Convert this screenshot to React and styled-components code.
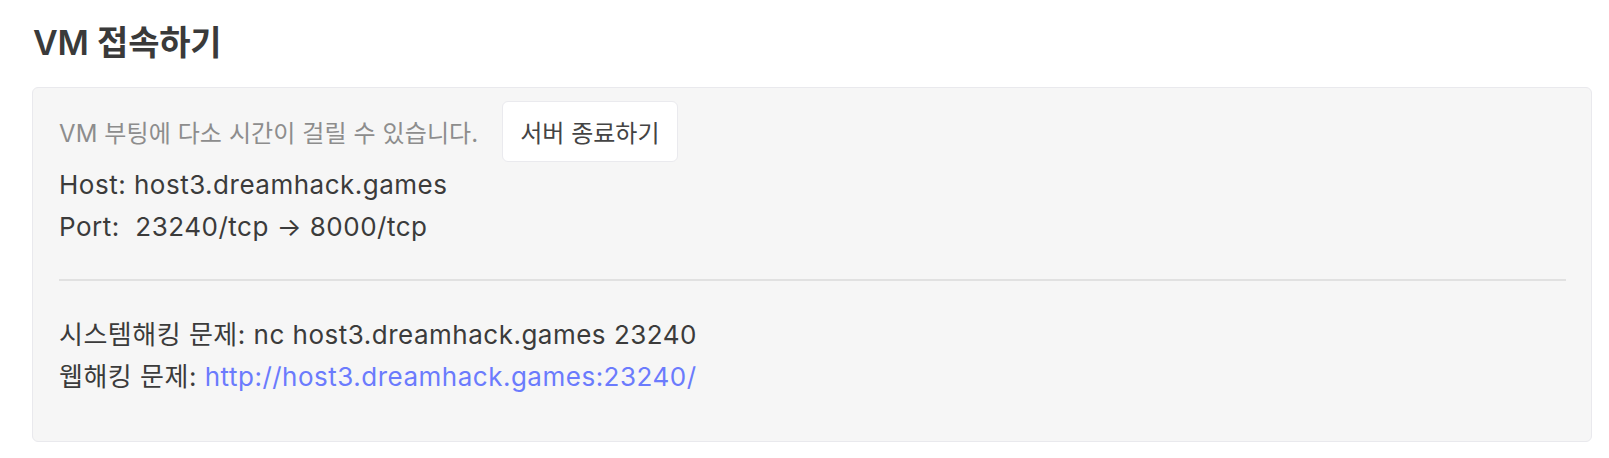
import React from "react";
import styled, { createGlobalStyle } from "styled-components";

const GlobalStyle = createGlobalStyle`
  html, body {
    margin: 0;
    padding: 0;
    background: #ffffff;
  }
  body {
    font-family: Inter, "Noto Sans CJK KR", "Noto Sans", sans-serif;
    color: #3b3b3b;
    -webkit-font-smoothing: antialiased;
  }
`;

const Page = styled.div`
  padding: 19px 17px 16px 32px;
`;

const Title = styled.h2`
  margin: 0 0 20px 1px;
  font-size: 34px;
  line-height: 48px;
  font-weight: 600;
  color: #3a3a3a;
  letter-spacing: -0.2px;
`;

const Card = styled.section`
  background: #f6f6f6;
  border: 1px solid #e9e9ed;
  border-radius: 6px;
  padding: 13px 25px 43px 26px;
`;

const TopRow = styled.div`
  display: flex;
  align-items: center;
  gap: 24px;
`;

const Hint = styled.span`
  font-size: 24px;
  letter-spacing: 0.1px;
  color: #8d8d8d;
`;

const Button = styled.button`
  height: 61px;
  padding: 0 17px;
  background: #ffffff;
  border: 1px solid #eaeaee;
  border-radius: 6px;
  font-family: inherit;
  font-size: 24px;
  color: #444444;
  cursor: pointer;
`;

const Info = styled.div`
  margin-top: 2px;
`;

const Line = styled.div`
  font-size: 26px;
  line-height: 42px;
  letter-spacing: 0.5px;
  color: #3b3b3b;
  white-space: pre;
`;

const Divider = styled.hr`
  margin: 31px 0 33px;
  border: none;
  height: 2px;
  background: #e1e1e1;
`;

const Link = styled.a`
  color: #6b7bfd;
  text-decoration: none;
`;

export default function App() {
  return (
    <>
      <GlobalStyle />
      <Page>
        <Title>VM 접속하기</Title>
        <Card>
          <TopRow>
            <Hint>VM 부팅에 다소 시간이 걸릴 수 있습니다.</Hint>
            <Button type="button">서버 종료하기</Button>
          </TopRow>
          <Info>
            <Line>Host: host3.dreamhack.games</Line>
            <Line>Port:  23240/tcp → 8000/tcp</Line>
          </Info>
          <Divider />
          <Line>시스템해킹 문제: nc host3.dreamhack.games 23240</Line>
          <Line>
            웹해킹 문제:{" "}
            <Link href="http://host3.dreamhack.games:23240/">
              http://host3.dreamhack.games:23240/
            </Link>
          </Line>
        </Card>
      </Page>
    </>
  );
}
